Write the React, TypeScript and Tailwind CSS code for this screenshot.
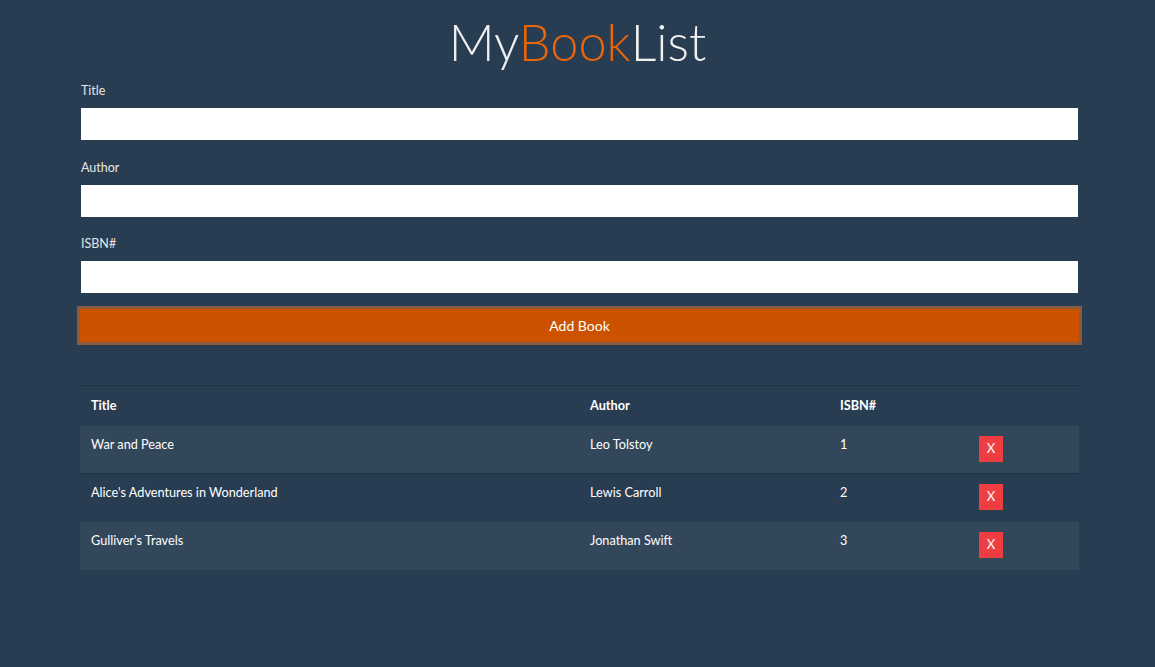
import React from "react";

const books = [
  { title: "War and Peace", author: "Leo Tolstoy", isbn: "1" },
  { title: "Alice's Adventures in Wonderland", author: "Lewis Carroll", isbn: "2" },
  { title: "Gulliver's Travels", author: "Jonathan Swift", isbn: "3" },
];

function Field({ label }: { label: string }) {
  return (
    <div className="flex flex-col">
      <label className="text-[12.5px] leading-[16px] text-[#e6e6e6] pl-[1px] mb-[9px]">{label}</label>
      <input className="h-[32px] mx-[1px] bg-white outline-none border-0" />
    </div>
  );
}

export default function App() {
  return (
    <div
      className="min-h-[667px] bg-[#283d52] text-white"
      style={{ fontFamily: "Lato, 'Noto Sans', sans-serif" }}
    >
      <h1 className="text-center text-[50.5px] font-light leading-[48px] pt-[18px] text-[#f0f0f0]">
        My<span className="text-[#e8650a]">Book</span>List
      </h1>
      <div className="ml-[80px] w-[999px] mt-[17px]">
        <div className="flex flex-col gap-[19.5px]">
          <Field label="Title" />
          <Field label="Author" />
          <Field label="ISBN#" />
        </div>
        <button className="mt-[13px] -ml-[3px] w-[1005px] h-[39px] bg-[#cc5200] border-[3px] border-[#8a5b3e] text-[14px] text-white">
          Add Book
        </button>
        <table className="mt-[40px] w-[999px] border-collapse table-fixed text-[12.7px]">
          <thead>
            <tr className="h-[40px] border-t border-[#1f3243]">
              <th className="w-[499px] text-left font-bold pl-[11px] align-middle">Title</th>
              <th className="w-[250px] text-left font-bold pl-[11px] align-middle">Author</th>
              <th className="w-[139px] text-left font-bold pl-[11px] align-middle">ISBN#</th>
              <th className="w-[111px]"></th>
            </tr>
          </thead>
          <tbody>
            {books.map((b, i) => (
              <tr
                key={b.isbn}
                className={
                  "h-[48px] " +
                  (i % 2 === 0 ? "bg-[#33475b] " : "bg-[#283d52] ") +
                  (i === 0 ? "border-b border-[#1f3243]" : "")
                }
              >
                <td className="pl-[11px] pt-[10px] align-top leading-[16px]">{b.title}</td>
                <td className="pl-[11px] pt-[10px] align-top leading-[16px]">{b.author}</td>
                <td className="pl-[11px] pt-[10px] align-top leading-[16px]">{b.isbn}</td>
                <td className="pl-[11px] pt-[10px] align-top">
                  <button className="w-[24px] h-[26px] bg-[#ee3e42] text-white text-[13px] flex items-center justify-center">
                    X
                  </button>
                </td>
              </tr>
            ))}
          </tbody>
        </table>
      </div>
    </div>
  );
}
